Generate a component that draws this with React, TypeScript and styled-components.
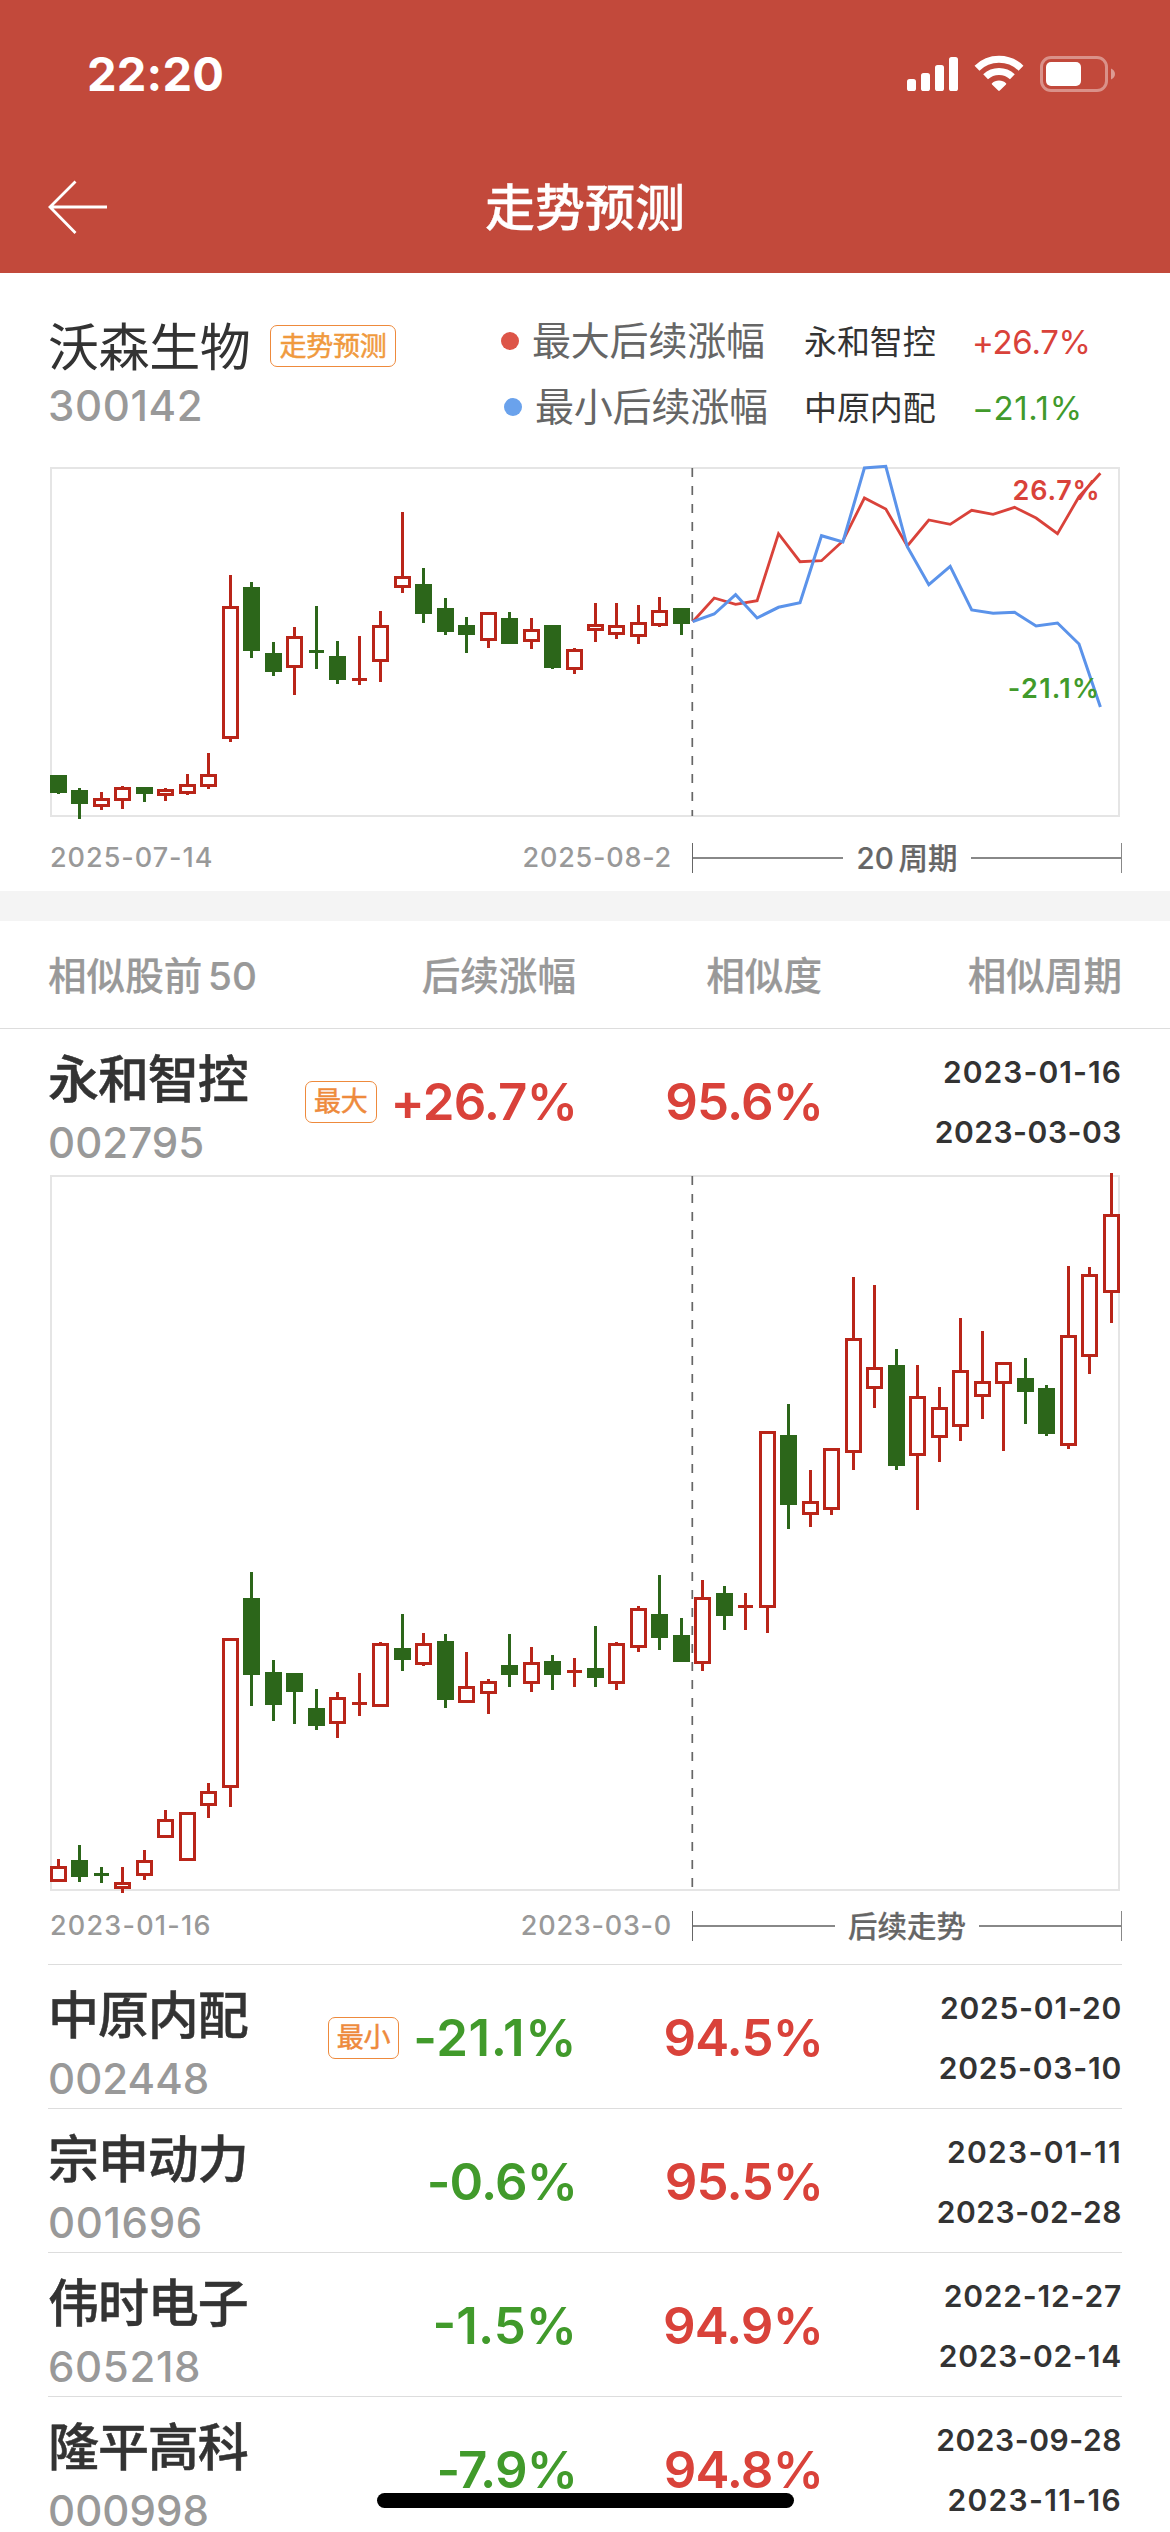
import React from "react";
import styled, { createGlobalStyle } from "styled-components";

const RED = "#d9423a";
const GREEN = "#419a2b";
const CANDLE_RED = "#b92519";
const CANDLE_GREEN = "#2c661a";

const GlobalStyle = createGlobalStyle`
  * { box-sizing: border-box; }
  html, body { margin: 0; padding: 0; background: #fff; }
  body {
    width: 1170px;
    height: 2532px;
    overflow: hidden;
    font-family: Inter, "Noto Sans CJK SC", sans-serif;
    color: #333;
  }
`;

const Screen = styled.div`
  position: relative;
  width: 1170px;
  height: 2532px;
  overflow: hidden;
  background: #fff;
`;

const Header = styled.header`
  height: 273px;
  background: #c2493b;
  color: #fff;
`;

const StatusBar = styled.div`
  display: flex;
  align-items: center;
  justify-content: space-between;
  height: 148px;
  padding: 0 54px 0 87px;
`;

const Clock = styled.div`
  font-size: 47px;
  font-weight: 700;
  line-height: 60px;
  letter-spacing: 0.2px;
`;

const StatusIcons = styled.svg`
  display: block;
  width: 210px;
  height: 38px;
`;

const NavBar = styled.div`
  display: grid;
  grid-template-columns: 120px 1fr 120px;
  align-items: center;
  height: 118px;
`;

const BackArrow = styled.svg`
  display: block;
  width: 62px;
  height: 60px;
  margin-left: 47px;
`;

const Title = styled.h1`
  margin: 0;
  padding-top: 2px;
  font-size: 50px;
  font-weight: 500;
  line-height: 60px;
  text-align: center;
  -webkit-text-stroke: 0.3px currentColor;
`;

const Forecast = styled.section`
  height: 618px;
  padding: 35px 48px 0;
`;

const Summary = styled.div`
  display: flex;
  height: 132px;
`;

const StockInfo = styled.div`
  width: 452px;
  padding-top: 8px;
`;

const NameLine = styled.div`
  display: flex;
  align-items: center;
  gap: 20px;
  height: 60px;
`;

/* Narrow "1" digits are evened out by widening the tracking of the whole number. */
const tracking = (text: string, base: number) => {
  const ones = text.split("1").length - 1;
  return `${(base + (ones * 0.085) / text.length).toFixed(4)}em`;
};

const StockName = styled.div<{ $bold?: boolean }>`
  padding-top: ${(p) => (p.$bold ? 2 : 3)}px;
  font-size: 51px;
  font-weight: ${(p) => (p.$bold ? 500 : 400)};
  line-height: ${(p) => (p.$bold ? 62 : 60)}px;
  letter-spacing: ${(p) => (p.$bold ? -1.1 : -0.4)}px;
  white-space: nowrap;
  -webkit-text-stroke: ${(p) => (p.$bold ? "0.5px" : "0")} currentColor;
`;

const StockCode = styled.div<{ $tall?: boolean; $text: string }>`
  margin-top: ${(p) => (p.$tall ? 11 : 0)}px;
  font-size: 42px;
  font-weight: 550;
  line-height: ${(p) => (p.$tall ? 42 : 60)}px;
  letter-spacing: ${(p) => tracking(p.$text, 0.001)};
  color: #999;
`;

const Tag = styled.span<{ $soft?: boolean }>`
  display: inline-flex;
  align-items: center;
  height: 42px;
  padding: 1px 8px 0;
  border: 1.5px solid #ee8a3c;
  border-radius: 7px;
  font-size: 27px;
  line-height: 38px;
  letter-spacing: -0.2px;
  font-weight: 400;
  color: ${(p) => (p.$soft ? "#f09a3e" : "#ee8a3c")};
  white-space: nowrap;
  -webkit-text-stroke: 0.5px currentColor;
`;

const Legend = styled.div`
  flex: 1;
`;

const LegendRow = styled.div`
  display: grid;
  grid-template-columns: 304px 168px 1fr;
  align-items: center;
  height: 66px;
`;

const LegendLabel = styled.div<{ $indent: number }>`
  display: flex;
  align-items: center;
  gap: 13px;
  padding-left: ${(p) => p.$indent}px;
  font-size: 39px;
  line-height: 60px;
  letter-spacing: -0.2px;
  color: #666;
  white-space: nowrap;
`;

const Dot = styled.i<{ $color: string }>`
  width: 18px;
  height: 18px;
  border-radius: 50%;
  background: ${(p) => p.$color};
`;

const LegendStock = styled.div`
  padding-top: 1px;
  font-size: 33px;
  line-height: 60px;
  letter-spacing: -0.1px;
`;

const LegendValue = styled.div<{ $color: string; $text: string }>`
  padding-top: 1px;
  font-size: 33px;
  line-height: 60px;
  letter-spacing: ${(p) => tracking(p.$text, -0.008)};
  color: ${(p) => p.$color};
  white-space: nowrap;
`;

const ChartSvg = styled.svg<{ $gap: number }>`
  display: block;
  width: 1070px;
  margin: ${(p) => p.$gap}px 0 0 2px;
  overflow: visible;
`;

const Axis = styled.div<{ $gap: number }>`
  display: flex;
  height: 30px;
  margin-top: ${(p) => p.$gap}px;
`;

const AxisDates = styled.div`
  display: flex;
  justify-content: space-between;
  width: 644px;
  padding: 0 20px 0 2px;
`;

const AxisDate = styled.span<{ $text: string }>`
  font-size: 27px;
  font-weight: 550;
  line-height: 29px;
  letter-spacing: ${(p) => tracking(p.$text, 0.028)};
  color: #999;
`;

const Bracket = styled.div`
  display: flex;
  align-items: center;
  flex: 1;
  gap: 13px;
  border-left: 1px solid #666;
  border-right: 1px solid #888;
  font-size: 29.5px;
  font-weight: 500;
  line-height: 30px;
  word-spacing: -3px;
  color: #666;
  white-space: nowrap;
  -webkit-text-stroke: 0.2px currentColor;
`;

const BracketLine = styled.i`
  flex: 1;
  height: 2px;
  background: #888;
`;

const Band = styled.div`
  height: 30px;
  background: #f4f4f4;
`;

const columns = "250px 278px 246px 300px";

const TableHead = styled.div`
  display: grid;
  grid-template-columns: ${columns};
  height: 107px;
  padding: 0 48px;
  font-size: 38.6px;
  font-weight: 500;
  line-height: 110px;
  word-spacing: -4.5px;
  color: #999;
  -webkit-text-stroke: 0.2px currentColor;
`;

const HeadCell = styled.div<{ $right?: boolean }>`
  text-align: ${(p) => (p.$right ? "right" : "left")};
  white-space: nowrap;
`;

const Row = styled.div<{ $full?: boolean }>`
  margin: ${(p) => (p.$full ? "0" : "0 48px")};
  padding: ${(p) => (p.$full ? "0 48px 23px" : "0")};
  border-top: 1px solid #ddd;
`;

const RowGrid = styled.div`
  display: grid;
  grid-template-columns: ${columns};
  height: 143px;
`;

const NameCell = styled.div`
  padding-top: 18px;
`;

const ValueCell = styled.div<{ $color: string }>`
  display: flex;
  align-items: center;
  justify-content: flex-end;
  gap: 14px;
  height: 145px;
  margin-right: -1px;
  color: ${(p) => p.$color};
  white-space: nowrap;
`;

const Percent = styled.span<{ $text: string }>`
  font-size: 51px;
  font-weight: 580;
  letter-spacing: ${(p) => tracking(p.$text, -0.017)};
`;

const PeriodCell = styled.div`
  padding-top: 13px;
`;

const PeriodDate = styled.div<{ $text: string }>`
  text-align: right;
  font-size: 30px;
  font-weight: 580;
  line-height: 60px;
  letter-spacing: ${(p) => tracking(p.$text, 0.018)};
`;

const HomeIndicator = styled.div`
  position: absolute;
  left: 377px;
  top: 2493px;
  width: 417px;
  height: 15px;
  border-radius: 8px;
  background: #000;
`;

type Candle = [kind: "r" | "g", high: number, top: number, bottom: number, low: number];

const slots = [
  58, 79, 101, 122, 144, 165, 187, 208, 230, 251, 273, 294, 316, 337, 359, 380, 402, 423, 445, 466, 488, 509, 531, 552,
  574, 595, 616, 638, 659, 681, 702, 724, 745, 767, 788, 810, 831, 853, 874, 896, 917, 939, 960, 982, 1003, 1025, 1046,
  1068, 1089, 1111,
];

const forecastCandles: Candle[] = [
  ["g", 775, 775, 793, 794], ["g", 788, 790, 804, 819], ["r", 792, 798, 807, 810], ["r", 786, 787, 801, 809],
  ["g", 787, 787, 794, 802], ["r", 788, 789, 796, 801], ["r", 774, 784, 794, 795], ["r", 753, 774, 787, 789],
  ["r", 575, 606, 739, 742], ["g", 582, 587, 651, 658], ["g", 642, 653, 672, 676], ["r", 627, 636, 668, 695],
  ["g", 606, 650, 653, 669], ["g", 641, 656, 680, 684], ["r", 636, 678, 681, 685], ["r", 611, 625, 662, 682],
  ["r", 512, 576, 588, 593], ["g", 568, 584, 614, 623], ["g", 598, 608, 632, 635], ["g", 617, 625, 635, 653],
  ["r", 612, 612, 641, 648], ["g", 612, 618, 644, 644], ["r", 618, 629, 642, 649], ["g", 625, 625, 668, 669],
  ["r", 648, 649, 670, 674], ["r", 603, 624, 631, 642], ["r", 603, 625, 635, 639], ["r", 605, 622, 637, 644],
  ["r", 597, 610, 626, 627], ["g", 608, 608, 624, 635],
];

const similarCandles: Candle[] = [
  ["r", 1859, 1866, 1882, 1882], ["g", 1845, 1860, 1877, 1882], ["g", 1867, 1873, 1876, 1883],
  ["r", 1867, 1882, 1889, 1893], ["r", 1850, 1860, 1876, 1880], ["r", 1810, 1819, 1838, 1838],
  ["r", 1812, 1812, 1861, 1861], ["r", 1783, 1791, 1806, 1818], ["r", 1638, 1638, 1788, 1807],
  ["g", 1572, 1598, 1675, 1706], ["g", 1660, 1672, 1705, 1721], ["g", 1673, 1673, 1692, 1724],
  ["g", 1689, 1708, 1726, 1730], ["r", 1692, 1697, 1724, 1738], ["r", 1673, 1702, 1705, 1716],
  ["r", 1642, 1643, 1707, 1707], ["g", 1614, 1648, 1660, 1671], ["r", 1633, 1643, 1665, 1666],
  ["g", 1634, 1641, 1700, 1708], ["r", 1652, 1686, 1703, 1703], ["r", 1679, 1681, 1694, 1714],
  ["g", 1634, 1665, 1675, 1687], ["r", 1647, 1662, 1684, 1692], ["g", 1655, 1661, 1675, 1690],
  ["r", 1658, 1670, 1673, 1687], ["g", 1626, 1668, 1678, 1687], ["r", 1642, 1643, 1684, 1690],
  ["r", 1606, 1608, 1648, 1652], ["g", 1575, 1614, 1638, 1650], ["g", 1618, 1635, 1662, 1662],
  ["r", 1580, 1597, 1664, 1671], ["g", 1586, 1593, 1616, 1630], ["r", 1593, 1605, 1608, 1630],
  ["r", 1431, 1431, 1608, 1633], ["g", 1404, 1435, 1505, 1529], ["r", 1470, 1501, 1515, 1527],
  ["r", 1448, 1448, 1510, 1515], ["r", 1277, 1338, 1453, 1470], ["r", 1285, 1367, 1389, 1408],
  ["g", 1349, 1365, 1466, 1470], ["r", 1365, 1396, 1456, 1510], ["r", 1387, 1407, 1438, 1462],
  ["r", 1318, 1370, 1427, 1441], ["r", 1331, 1381, 1397, 1419], ["r", 1362, 1362, 1384, 1451],
  ["g", 1358, 1378, 1392, 1424], ["g", 1385, 1388, 1434, 1436], ["r", 1266, 1335, 1446, 1449],
  ["r", 1267, 1274, 1357, 1374], ["r", 1173, 1214, 1293, 1323],
];

const maxLine = [
  621.7, 598, 604.3, 600.7, 533.7, 561.7, 560.7, 541, 498, 509, 546, 520, 524.3, 510.3, 514.3, 507.3, 518, 533.7, 496.7,
  473.3,
];
const minLine = [
  621.7, 614, 594.7, 618, 607.3, 602.7, 535.7, 542, 468, 466.3, 546.7, 584.7, 566.3, 610, 613.3, 612.3, 626, 623, 644,
  707,
];

const toPoints = (ys: number[]) => ys.map((y, i) => `${(692.7 + 21.46 * i).toFixed(1)},${y}`).join(" ");

function CandleMark({ x, candle }: { x: number; candle: Candle }) {
  const [kind, high, top, bottom, low] = candle;
  const color = kind === "r" ? CANDLE_RED : CANDLE_GREEN;
  if (bottom - top === 3) {
    return (
      <g fill={color}>
        <rect x={x - 1} y={high} width={3} height={low - high} />
        <rect x={x - 7} y={top} width={15} height={3} />
      </g>
    );
  }
  return (
    <g fill={color}>
      <rect x={x - 1} y={high} width={3} height={low - high} />
      <rect x={x - 8} y={top} width={17} height={bottom - top} />
      {kind === "r" && <rect x={x - 5} y={top + 3} width={11} height={bottom - top - 6} fill="#fff" />}
    </g>
  );
}

function Chart(props: { top: number; height: number; gap: number; candles: Candle[]; children?: React.ReactNode }) {
  const { top, height, gap, candles, children } = props;
  return (
    <ChartSvg $gap={gap} height={height} viewBox={`50 ${top} 1070 ${height}`}>
      <rect x={51} y={top + 1} width={1068} height={height - 2} fill="none" stroke="#e5e5e5" strokeWidth={2} />
      <line
        x1={692.3}
        x2={692.3}
        y1={top + 1}
        y2={top + height - 1}
        stroke="#666"
        strokeWidth={1.7}
        strokeDasharray="9 9"
      />
      <g shapeRendering="crispEdges">
        {candles.map((c, i) => (
          <CandleMark key={i} x={slots[i]} candle={c} />
        ))}
      </g>
      {children}
    </ChartSvg>
  );
}

const ChartLabel = styled.text<{ $spacing: number }>`
  font-size: 27px;
  font-weight: 580;
  text-anchor: end;
  letter-spacing: ${(p) => p.$spacing}px;
`;

function ChartAxis(props: { gap: number; from: string; to: string; label: string }) {
  return (
    <Axis $gap={props.gap}>
      <AxisDates>
        <AxisDate $text={props.from}>{props.from}</AxisDate>
        <AxisDate $text={props.to}>{props.to}</AxisDate>
      </AxisDates>
      <Bracket>
        <BracketLine />
        <span>{props.label}</span>
        <BracketLine />
      </Bracket>
    </Axis>
  );
}

interface Stock {
  name: string;
  code: string;
  change: string;
  similarity: string;
  start: string;
  end: string;
  tag?: string;
}

const stocks: Stock[] = [
  { name: "永和智控", code: "002795", tag: "最大", change: "+26.7%", similarity: "95.6%", start: "2023-01-16", end: "2023-03-03" },
  { name: "中原内配", code: "002448", tag: "最小", change: "-21.1%", similarity: "94.5%", start: "2025-01-20", end: "2025-03-10" },
  { name: "宗申动力", code: "001696", change: "-0.6%", similarity: "95.5%", start: "2023-01-11", end: "2023-02-28" },
  { name: "伟时电子", code: "605218", change: "-1.5%", similarity: "94.9%", start: "2022-12-27", end: "2023-02-14" },
  { name: "隆平高科", code: "000998", change: "-7.9%", similarity: "94.8%", start: "2023-09-28", end: "2023-11-16" },
];

function StockRow({ stock, full, children }: { stock: Stock; full?: boolean; children?: React.ReactNode }) {
  return (
    <Row $full={full}>
      <RowGrid>
        <NameCell>
          <StockName $bold>{stock.name}</StockName>
          <StockCode $tall $text={stock.code}>
            {stock.code}
          </StockCode>
        </NameCell>
        <ValueCell $color={stock.change.startsWith("+") ? RED : GREEN}>
          {stock.tag && <Tag>{stock.tag}</Tag>}
          <Percent $text={stock.change}>{stock.change}</Percent>
        </ValueCell>
        <ValueCell $color={RED}>
          <Percent $text={stock.similarity}>{stock.similarity}</Percent>
        </ValueCell>
        <PeriodCell>
          <PeriodDate $text={stock.start}>{stock.start}</PeriodDate>
          <PeriodDate $text={stock.end}>{stock.end}</PeriodDate>
        </PeriodCell>
      </RowGrid>
      {children}
    </Row>
  );
}

export default function App() {
  return (
    <Screen>
      <GlobalStyle />
      <Header>
        <StatusBar>
          <Clock>22:20</Clock>
          <StatusIcons viewBox="906 55 210 38">
            <g fill="#fff">
              <rect x="907" y="79" width="9" height="12" rx="2.6" />
              <rect x="921" y="73" width="9" height="18" rx="2.6" />
              <rect x="935" y="65" width="9" height="26" rx="2.6" />
              <rect x="949" y="57" width="9" height="34" rx="2.6" />
              <path d="M999 80.5c2.8 0 5.2 1 7 2.7.4.4.4.8 0 1.2l-6.2 6.2c-.5.5-1.1.5-1.6 0L992 84.4c-.4-.4-.4-.8 0-1.2 1.8-1.7 4.2-2.7 7-2.7z" />
            </g>
            <g fill="none" stroke="#fff" strokeWidth="7">
              <path d="M985.6 76.8a19.6 19.6 0 0 1 26.8 0" />
              <path d="M977 68.2a31.6 31.6 0 0 1 44 0" />
            </g>
            <rect x="1041.5" y="57.5" width="65" height="33" rx="9.5" fill="none" stroke="#fff" strokeOpacity="0.4" strokeWidth="3" />
            <rect x="1046" y="62" width="35" height="24" rx="5" fill="#fff" />
            <path d="M1111 68.5v11c2.5-.9 4-3 4-5.5s-1.5-4.6-4-5.5z" fill="#fff" fillOpacity="0.45" />
          </StatusIcons>
        </StatusBar>
        <NavBar>
          <BackArrow viewBox="47 177 62 60">
            <path d="M75.5 181.5L50 207l25.5 26M50 207h57" fill="none" stroke="#fff" strokeWidth="2.8" />
          </BackArrow>
          <Title>走势预测</Title>
        </NavBar>
      </Header>

      <Forecast>
        <Summary>
          <StockInfo>
            <NameLine>
              <StockName>沃森生物</StockName>
              <Tag $soft>走势预测</Tag>
            </NameLine>
            <StockCode $text="300142">300142</StockCode>
          </StockInfo>
          <Legend>
            <LegendRow>
              <LegendLabel $indent={1}>
                <Dot $color="#dd5548" />
                最大后续涨幅
              </LegendLabel>
              <LegendStock>永和智控</LegendStock>
              <LegendValue $color={RED} $text="+26.7%">
                +26.7%
              </LegendValue>
            </LegendRow>
            <LegendRow>
              <LegendLabel $indent={4}>
                <Dot $color="#6aa2ec" />
                最小后续涨幅
              </LegendLabel>
              <LegendStock>中原内配</LegendStock>
              <LegendValue $color={GREEN} $text="−21.1%">
                −21.1%
              </LegendValue>
            </LegendRow>
          </Legend>
        </Summary>
        <Chart top={467} height={350} gap={27} candles={forecastCandles}>
          <polyline points={toPoints(maxLine)} fill="none" stroke={RED} strokeWidth={2.8} />
          <polyline points={toPoints(minLine)} fill="none" stroke="#5b93ea" strokeWidth={3} />
          <ChartLabel x={1100.5} y={499.5} fill={RED} $spacing={0.8}>
            26.7%
          </ChartLabel>
          <ChartLabel x={1100.5} y={698} fill={GREEN} $spacing={1.3}>
            -21.1%
          </ChartLabel>
        </Chart>
        <ChartAxis gap={26} from="2025-07-14" to="2025-08-2" label="20 周期" />
      </Forecast>

      <Band />

      <TableHead>
        <HeadCell>相似股前 50</HeadCell>
        <HeadCell $right>后续涨幅</HeadCell>
        <HeadCell $right>相似度</HeadCell>
        <HeadCell $right>相似周期</HeadCell>
      </TableHead>

      <StockRow stock={stocks[0]} full>
        <Chart top={1175} height={716} gap={3} candles={similarCandles} />
        <ChartAxis gap={20} from="2023-01-16" to="2023-03-0" label="后续走势" />
      </StockRow>
      {stocks.slice(1).map((s) => (
        <StockRow key={s.code} stock={s} />
      ))}

      <HomeIndicator />
    </Screen>
  );
}
